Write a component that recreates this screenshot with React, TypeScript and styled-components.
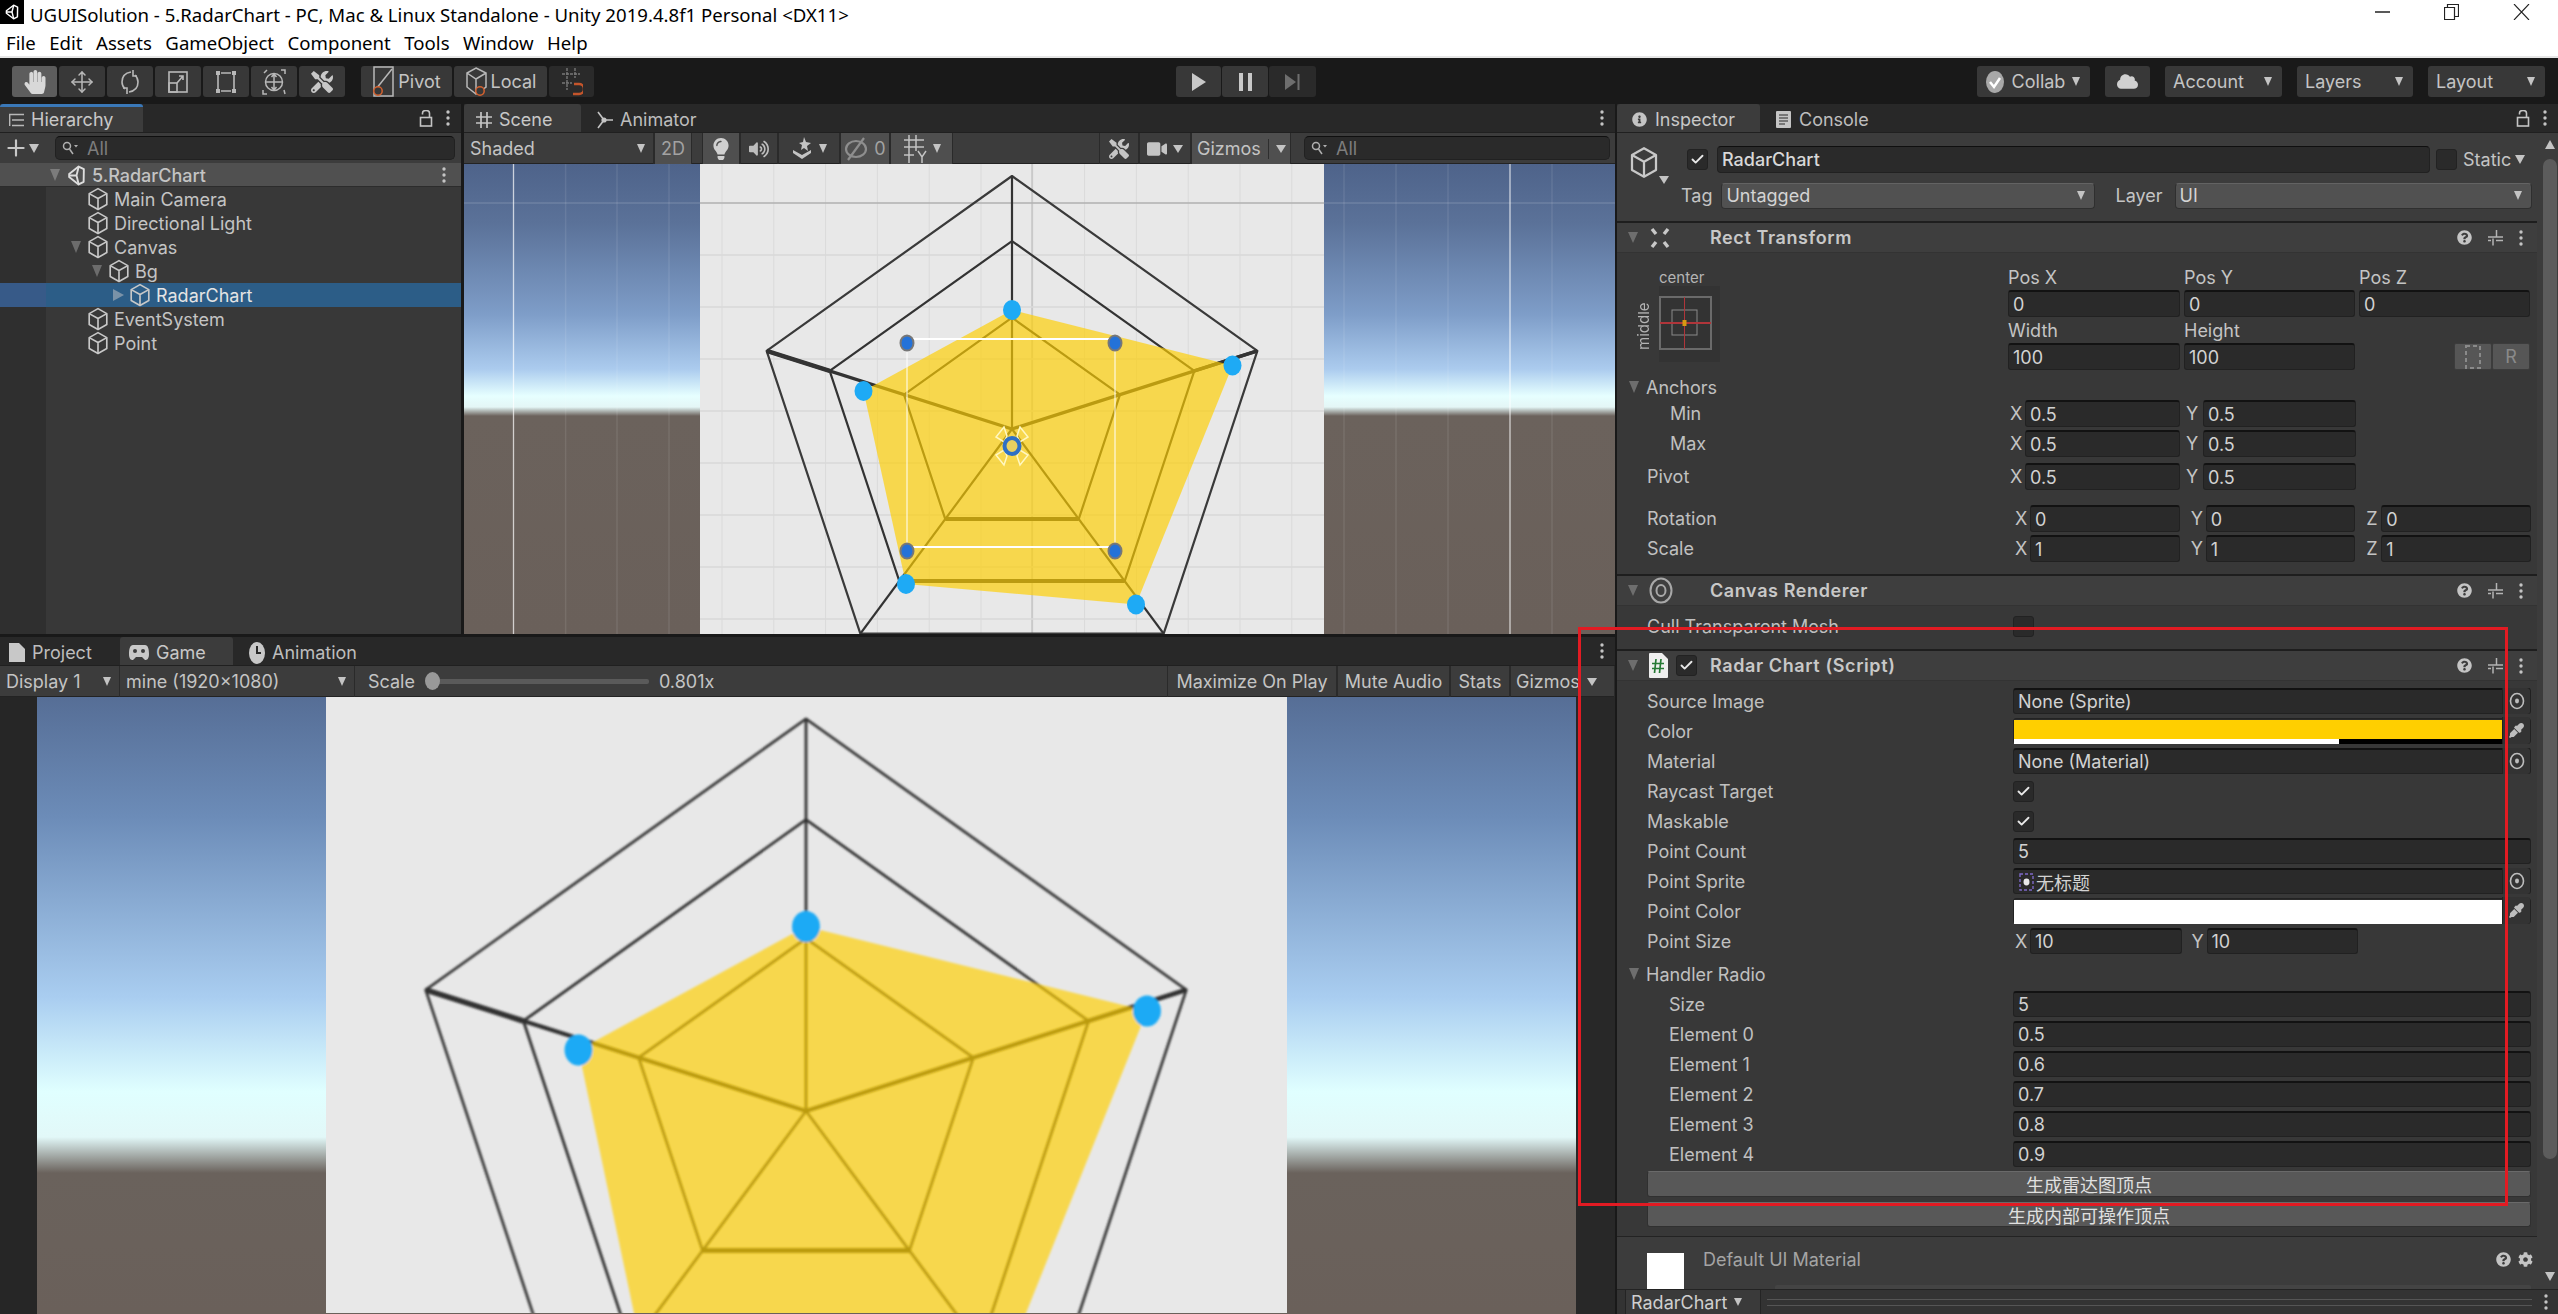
import React from 'react';
import styled, { createGlobalStyle } from 'styled-components';
import { Check, Move, Plus } from 'lucide-react';
import { FaCloud, FaCog, FaEyeDropper, FaHandPaper, FaInfoCircle, FaLightbulb, FaQuestionCircle, FaTools, FaVideo, FaVolumeUp } from 'react-icons/fa';

const GlobalStyle = createGlobalStyle`
  html, body { margin: 0; padding: 0; background: #191919; }
  * { box-sizing: border-box; }
`;

const UI = `Inter, "Noto Sans CJK SC", sans-serif`;

const Page = styled.div`
  position: relative;
  width: 2558px;
  height: 1314px;
  overflow: hidden;
  display: flex;
  flex-direction: column;
  font-family: ${UI};
  font-size: 18px;
  color: #c4c4c4;
  background: #191919;
`;

const TitleBar = styled.div`
  height: 29px;
  background: #fff;
  color: #000;
  display: flex;
  align-items: center;
  font-family: "Noto Sans", sans-serif;
  font-size: 18.6px;
`;
const TitleIcon = styled.div`
  width: 24px;
  height: 24px;
  margin-top: -5px;
  margin-right: 6px;
  background: #000;
  display: flex;
  align-items: center;
  justify-content: center;
`;
const WindowButtons = styled.div`
  margin-left: auto;
  display: flex;
  align-items: center;
  padding-right: 28px;
  gap: 54px;
  margin-top: -6px;
`;
const MenuBar = styled.div`
  height: 29px;
  background: #fff;
  color: #000;
  display: flex;
  align-items: center;
  gap: 13.5px;
  padding-left: 6px;
  font-family: "Noto Sans", sans-serif;
  font-size: 18.6px;
  border-bottom: 2px solid #e6e6e6;
`;

const MainToolbar = styled.div`
  height: 46px;
  display: flex;
  align-items: flex-start;
  padding-top: 8px;
  background: #191919;
`;
const ToolGroup = styled.div<{ $w?: number; $pl?: number; $gap?: number; $end?: boolean }>`
  display: flex;
  gap: ${(p) => p.$gap ?? 2}px;
  ${(p) => (p.$w ? `width: ${p.$w}px;` : '')}
  ${(p) => (p.$pl ? `padding-left: ${p.$pl}px;` : '')}
  ${(p) => (p.$end ? 'margin-left: auto; padding-right: 13px;' : '')}
`;
const ToolButton = styled.div<{ $w: number; $on?: boolean; $dim?: boolean; $ml?: number }>`
  width: ${(p) => p.$w}px;
  height: 31px;
  margin-left: ${(p) => p.$ml ?? 0}px;
  background: ${(p) => (p.$on ? '#5d5d5d' : p.$dim ? '#2a2a2a' : '#383838')};
  border-radius: 3px;
  display: flex;
  align-items: center;
  justify-content: center;
  gap: 3px;
  color: #c4c4c4;
  font-size: 18px;
`;
const DropButton = styled(ToolButton)`
  justify-content: space-between;
  padding: 0 10px 0 8px;
`;

const Caret = styled.span<{ $w?: number; $h?: number; $c?: string; $right?: boolean; $up?: boolean }>`
  flex: none;
  display: inline-block;
  width: 0;
  height: 0;
  ${(p) => (p.$up ? 'transform: rotate(180deg);' : '')}
  ${(p) =>
    p.$right
      ? `border-top: ${(p.$w ?? 10) / 2}px solid transparent;
         border-bottom: ${(p.$w ?? 10) / 2}px solid transparent;
         border-left: ${p.$h ?? 9}px solid ${p.$c ?? '#c4c4c4'};`
      : `border-left: ${(p.$w ?? 10) / 2}px solid transparent;
         border-right: ${(p.$w ?? 10) / 2}px solid transparent;
         border-top: ${p.$h ?? 9}px solid ${p.$c ?? '#c4c4c4'};`}
`;

const Workspace = styled.div`
  flex: 1;
  display: flex;
  gap: 2px;
  min-height: 0;
`;
const LeftColumn = styled.div`
  width: 1615px;
  display: flex;
  flex-direction: column;
  gap: 3px;
`;
const TopRow = styled.div`
  height: 530px;
  display: flex;
  gap: 3px;
`;
const Panel = styled.div<{ $w?: number }>`
  ${(p) => (p.$w ? `width: ${p.$w}px;` : 'flex: 1;')}
  min-width: 0;
  display: flex;
  flex-direction: column;
  overflow: hidden;
  background: #383838;
`;
const TabStrip = styled.div`
  height: 29px;
  flex: none;
  display: flex;
  align-items: stretch;
  background: #282828;
  border-bottom: 1px solid #202020;
`;
const Tab = styled.div<{ $w: number; $on?: boolean; $blue?: boolean; $pl?: number; $gap?: number }>`
  width: ${(p) => p.$w}px;
  display: flex;
  align-items: center;
  gap: ${(p) => p.$gap ?? 7}px;
  padding-left: ${(p) => p.$pl ?? 9}px;
  color: ${(p) => (p.$on ? '#c8c8c8' : '#bdbdbd')};
  background: ${(p) => (p.$on ? '#3c3c3c' : 'transparent')};
  border-top: 3px solid ${(p) => (p.$blue ? '#3a78b8' : 'transparent')};
  border-radius: 3px 3px 0 0;
  font-size: 18px;
`;
const TabTools = styled.div`
  margin-left: auto;
  display: flex;
  align-items: center;
  gap: 13px;
  padding-right: 11px;
`;

const HierarchyBar = styled.div`
  height: 30px;
  flex: none;
  display: flex;
  align-items: center;
  background: #3c3c3c;
  padding: 0 6px 0 3px;
`;
const SearchBox = styled.div<{ $w?: number; $ml?: number }>`
  ${(p) => (p.$w ? `width: ${p.$w}px;` : 'flex: 1;')}
  margin-left: ${(p) => p.$ml ?? 0}px;
  height: 24px;
  background: #2a2a2a;
  border: 1px solid #212121;
  border-top-color: #0f0f0f;
  border-radius: 5px;
  display: flex;
  align-items: center;
  gap: 9px;
  padding-left: 6px;
  color: #7d7d7d;
`;
const TreeList = styled.div`
  flex: 1;
  background: linear-gradient(90deg, #2f2f2f 46px, #383838 46px);
`;
const TreeRow = styled.div<{ $depth: number; $kind?: 'head' | 'selected' }>`
  height: 24px;
  display: flex;
  align-items: center;
  padding-left: ${(p) => 46 + p.$depth * 21}px;
  padding-right: 15px;
  color: ${(p) => (p.$kind === 'selected' ? '#e4e4e4' : '#c4c4c4')};
  background: ${(p) =>
    p.$kind === 'selected'
      ? 'linear-gradient(90deg, #375a88 46px, #2c5d87 46px)'
      : p.$kind === 'head'
        ? '#505050'
        : 'transparent'};
  ${(p) => (p.$kind === 'head' ? 'box-shadow: inset 0 -1px 0 #2c2c2c; font-weight: 500;' : '')}
`;
const TreeArrow = styled.span`
  width: 20px;
  flex: none;
  display: flex;
  justify-content: center;
  padding-right: 2px;
`;
const TreeLabel = styled.span`
  margin-left: 5px;
`;
const TreeDots = styled.span`
  margin-left: auto;
  display: flex;
`;

const ViewBar = styled.div`
  height: 31px;
  flex: none;
  display: flex;
  align-items: stretch;
  background: #3c3c3c;
  box-shadow: inset 0 -1px 0 #232323;
`;
const ViewCell = styled.div<{ $w: number; $on?: boolean; $ml?: number; $dim?: boolean }>`
  width: ${(p) => p.$w}px;
  margin-left: ${(p) => p.$ml ?? 0}px;
  flex: none;
  display: flex;
  align-items: center;
  justify-content: center;
  gap: 6px;
  background: ${(p) => (p.$on ? '#4f4f4f' : 'transparent')};
  border-right: 1px solid #2a2a2a;
  border-left: 1px solid #2a2a2a;
  color: ${(p) => (p.$dim ? '#a2a2a2' : '#c4c4c4')};
  white-space: nowrap;
  overflow: hidden;
`;
const ViewPlain = styled(ViewCell)`
  justify-content: space-between;
  padding: 0 8px 0 6px;
  border-left: none;
`;
const GizmoCell = styled(ViewCell)`
  justify-content: flex-start;
  padding-left: 5px;
  gap: 7px;
`;
const GizmoSep = styled.span`
  width: 1px;
  height: 20px;
  background: #2e2e2e;
  flex: none;
`;
const Spacer = styled.div`
  flex: 1;
`;
const ViewSearchWrap = styled.div`
  padding: 3px 5px 0 13px;
`;
const GameBarText = styled.span<{ $w?: number; $ml?: number }>`
  ${(p) => (p.$w ? `width: ${p.$w}px; overflow: hidden;` : '')}
  margin-left: ${(p) => p.$ml ?? 0}px;
  align-self: center;
  white-space: nowrap;
  flex: none;
`;
const SliderTrack = styled.div`
  position: relative;
  width: 212px;
  height: 5px;
  margin-left: 22px;
  align-self: center;
  background: #5a5a5a;
  border-radius: 2px;
  flex: none;
`;
const SliderThumb = styled.div`
  position: absolute;
  left: -12px;
  top: -7px;
  width: 15px;
  height: 18px;
  border-radius: 50%;
  background: #999;
`;

const SceneView = styled.div`
  flex: 1;
  min-height: 0;
  background: linear-gradient(180deg, #4e638a 0, #5b7299 60px, #7e9dc8 150px, #abcbee 205px, #e6ffff 232px, #e4f6f6 243px, #6b625c 252px, #6a605a 100%);
  svg { display: block; }
`;
const GameView = styled.div`
  flex: 1;
  min-height: 0;
  background: linear-gradient(90deg, #262626 37px, transparent 37px, transparent 1576px, #282828 1576px),
    linear-gradient(180deg, #566e96 0, #6c8cb8 120px, #a9cdf0 300px, #e0ffff 395px, #e2f8f8 440px, #6a625c 476px, #6a605a 100%);
  svg { display: block; }
`;

const Inspector = styled.div`
  flex: 1;
  min-width: 0;
  display: flex;
  flex-direction: column;
  background: #383838;
`;
const InspectorBody = styled.div`
  flex: 1;
  min-height: 0;
  display: flex;
`;
const InspectorContent = styled.div`
  width: 920px;
  display: flex;
  flex-direction: column;
`;
const ScrollBar = styled.div`
  flex: 1;
  background: #3c3c3c;
  display: flex;
  flex-direction: column;
  align-items: center;
  padding: 7px 0 8px 4px;
`;
const ScrollThumb = styled.div`
  width: 14px;
  height: 1000px;
  margin-top: 10px;
  background: #5c5c5c;
  border-radius: 7px;
`;
const ObjectHeader = styled.div`
  height: 88px;
  background: #3c3c3c;
  display: grid;
  grid-template-columns: 64px 1fr;
  padding: 13px 6px 0 12px;
`;
const ObjectIcon = styled.div`
  position: relative;
`;
const ObjectCaret = styled(Caret)`
  position: absolute;
  left: 30px;
  top: 30px;
`;
const ObjectRows = styled.div`
  display: flex;
  flex-direction: column;
  gap: 9px;
`;
const NameRow = styled.div`
  height: 27px;
  display: flex;
  align-items: center;
`;
const TagRow = styled.div`
  height: 27px;
  display: flex;
  align-items: center;
`;
const TagLabel = styled.span<{ $ml: number }>`
  margin-left: ${(p) => p.$ml}px;
`;
const CheckBox = styled.div<{ $ml?: number }>`
  width: 21px;
  height: 21px;
  flex: none;
  margin-left: ${(p) => p.$ml ?? 0}px;
  background: #2a2a2a;
  border: 1px solid #222;
  border-radius: 3px;
  display: flex;
  align-items: center;
  justify-content: center;
  color: #e8e8e8;
`;
const NameField = styled.div`
  width: 713px;
  height: 27px;
  margin-left: 9px;
  padding-left: 4px;
  background: #2a2a2a;
  border: 1px solid #212121;
  border-top-color: #0f0f0f;
  border-radius: 4px;
  display: flex;
  align-items: center;
  color: #d8d8d8;
  font-weight: 500;
`;
const StaticLabel = styled.span`
  margin-left: 6px;
  display: flex;
  align-items: center;
  gap: 4px;
`;
const Dropdown = styled.div<{ $w: number; $ml?: number }>`
  width: ${(p) => p.$w}px;
  margin-left: ${(p) => p.$ml ?? 0}px;
  height: 26px;
  background: #515151;
  border: 1px solid #2f2f2f;
  border-top-color: #636363;
  border-radius: 4px;
  display: flex;
  align-items: center;
  justify-content: space-between;
  padding: 0 9px 0 4px;
  color: #d4d4d4;
`;
const SectionHeader = styled.div`
  height: 32px;
  flex: none;
  display: flex;
  align-items: center;
  background: #3e3e3e;
  border-top: 2px solid #1e1e1e;
  border-bottom: 1px solid #333;
  padding-left: 11px;
`;
const SectionIcon = styled.span`
  width: 61px;
  margin-left: 11px;
  display: flex;
  align-items: center;
  gap: 8px;
`;
const SectionTitle = styled.span`
  font-weight: 600;
  color: #c8c8c8;
  letter-spacing: 0.6px;
`;
const SectionTools = styled.span`
  margin-left: auto;
  display: flex;
  align-items: center;
  gap: 16px;
  padding-right: 14px;
`;
const RectBody = styled.div`
  height: 321px;
  flex: none;
  padding-top: 15px;
`;
const RectTop = styled.div`
  display: grid;
  grid-template-columns: 387px 172px 171px 171px;
  column-gap: 4px;
  grid-template-rows: 18px 27px 18px 27px;
  row-gap: 4px;
  align-items: center;
`;
const AnchorBlock = styled.div`
  grid-row: 1 / span 4;
  display: grid;
  grid-template-columns: 42px 61px;
  grid-template-rows: 18px 76px;
  align-self: start;
`;
const SmallLabel = styled.span`
  font-size: 15px;
  color: #b4b4b4;
`;
const VerticalLabel = styled.span`
  font-size: 15px;
  color: #b4b4b4;
  writing-mode: vertical-rl;
  transform: rotate(180deg);
  justify-self: end;
  padding-top: 12px;
  margin-right: 6px;
`;
const AnchorBox = styled.div`
  background: #333;
  padding: 10px 8px 12px 0;
`;
const FieldHead = styled.span`
  color: #c4c4c4;
`;
const Field = styled.div<{ $h?: number }>`
  height: ${(p) => p.$h ?? 26}px;
  min-width: 0;
  flex: 1;
  padding-left: 4px;
  background: #2a2a2a;
  border: 1px solid #212121;
  border-top: 2px solid #121212;
  border-radius: 3px;
  display: flex;
  align-items: center;
  color: #d2d2d2;
  white-space: nowrap;
`;
const RectButtons = styled.div`
  display: flex;
  justify-content: flex-end;
`;
const RectButton = styled.div`
  width: 38px;
  height: 27px;
  background: #565656;
  border: 1px solid #3c3c3c;
  border-radius: 2px;
  display: flex;
  align-items: center;
  justify-content: center;
  color: #8a8a8a;
`;
const PropRow = styled.div<{ $h?: number; $mt?: number }>`
  height: ${(p) => p.$h ?? 30}px;
  margin-top: ${(p) => p.$mt ?? 0}px;
  flex: none;
  display: grid;
  grid-template-columns: 396px 518px;
  align-items: center;
`;
const PropLabel = styled.div<{ $indent?: number }>`
  padding-left: ${(p) => p.$indent ?? 30}px;
  display: flex;
  align-items: center;
  color: #c0c0c0;
  white-space: nowrap;
`;
const FoldLabel = styled(PropLabel)`
  padding-left: 12px;
  gap: 7px;
`;
const VecRow = styled.div<{ $w: number; $gap: number; $ml: number }>`
  width: ${(p) => p.$w}px;
  display: grid;
  grid-auto-flow: column;
  grid-auto-columns: minmax(0, 1fr);
  column-gap: ${(p) => p.$gap}px;
  margin-left: ${(p) => p.$ml}px;
`;
const VecItem = styled.div`
  display: flex;
  align-items: center;
  gap: 3px;
  min-width: 0;
`;
const Axis = styled.span<{ $w?: number }>`
  flex: none;
  width: ${(p) => p.$w ?? 13}px;
  padding-left: 1px;
`;
const CanvasBody = styled.div`
  height: 43px;
  flex: none;
  padding-top: 5px;
`;
const ScriptBody = styled.div`
  height: 555px;
  flex: none;
  padding-top: 5px;
`;
const ObjectField = styled(Field)`
  position: relative;
  padding-right: 28px;
`;
const PickerTag = styled.span`
  position: absolute;
  right: 0;
  top: -2px;
  bottom: -1px;
  width: 28px;
  display: flex;
  align-items: center;
  justify-content: center;
  background: #333;
  border-left: 1px solid #212121;
  border-radius: 0 3px 3px 0;
`;
const ColorField = styled.div`
  height: 26px;
  position: relative;
  background: #2a2a2a;
  border-radius: 3px;
  border: 1px solid #222;
  padding: 1px 28px 0 0;
`;
const ColorSwatch = styled.div<{ $c: string }>`
  height: 19px;
  background: ${(p) => p.$c};
`;
const AlphaBar = styled.div`
  height: 5px;
  background: #000;
`;
const AlphaFill = styled.div`
  height: 5px;
  background: #fff;
`;
const WhiteSwatch = styled.div`
  height: 24px;
  background: #fff;
`;
const WideButton = styled.div<{ $mt: number; $h: number }>`
  margin: ${(p) => p.$mt}px 6px 0 30px;
  height: ${(p) => p.$h}px;
  background: #585858;
  border: 1px solid #303030;
  border-top-color: #6a6a6a;
  border-radius: 3px;
  display: flex;
  align-items: center;
  justify-content: center;
  color: #e0e0e0;
`;
const MaterialBlock = styled.div`
  flex: 1;
  min-height: 0;
  display: flex;
  overflow: hidden;
  background: #3c3c3c;
  border-top: 1px solid #232323;
  padding: 16px 6px 0 30px;
  position: relative;
`;
const MaterialThumb = styled.div`
  width: 37px;
  height: 40px;
  background: #fff;
  flex: none;
`;
const MaterialName = styled.span`
  margin-left: 19px;
  margin-top: -4px;
  color: #a4a4a4;
`;
const MaterialTools = styled.span`
  margin-left: auto;
  display: flex;
  gap: 7px;
  margin-right: -2px;
  margin-top: -1px;
  height: 20px;
`;
const MaterialShader = styled.div`
  position: absolute;
  left: 158px;
  right: 6px;
  bottom: 0;
  height: 4px;
  background: #444;
  border-radius: 2px 2px 0 0;
`;
const AssetBar = styled.div`
  height: 25px;
  flex: none;
  display: flex;
  align-items: center;
  background: #333;
  border-top: 1px solid #232323;
  padding-left: 8px;
`;
const AssetName = styled.div`
  height: 100%;
  width: 136px;
  padding-left: 5px;
  display: flex;
  align-items: center;
  gap: 7px;
  border: 1px solid #242424;
  border-width: 0 1px;
  background: #3a3a3a;
  color: #cfcfcf;
`;
const AssetTrack = styled.div`
  flex: 1;
  height: 7px;
  margin: 0 12px 0 6px;
  border-top: 1px solid #555;
  border-bottom: 1px solid #555;
`;
const AssetDots = styled.span`
  padding-right: 10px;
  display: flex;
`;

const RedFrame = styled.div`
  position: absolute;
  left: 1578px;
  top: 627px;
  width: 930px;
  height: 579px;
  border: 3px solid #e21b23;
  pointer-events: none;
`;

/* ---- icons ---- */

const Dots = ({ c = '#c4c4c4' }: { c?: string }) => (
  <svg width="4" height="16" viewBox="0 0 4 16">
    <circle cx="2" cy="2" r="1.7" fill={c} />
    <circle cx="2" cy="8" r="1.7" fill={c} />
    <circle cx="2" cy="14" r="1.7" fill={c} />
  </svg>
);

const LockIcon = () => (
  <svg width="14" height="17" viewBox="0 0 14 17" fill="none" stroke="#c4c4c4" strokeWidth="1.6">
    <rect x="1.5" y="7.5" width="11" height="8.5" />
    <path d="M3.5 4.5V3a3.5 2.5 0 0 1 7 0v4" />
  </svg>
);

const Cube = ({ s = 22, c = '#c8c8c8', w = 1.5 }: { s?: number; c?: string; w?: number }) => (
  <svg width={s} height={s * 1.1} viewBox="0 0 20 22" fill="none" stroke={c} strokeWidth={w} strokeLinejoin="round" style={{ flex: 'none' }}>
    <path d="M10 1.5 18 6v10l-8 4.5L2 16V6z" />
    <path d="M2 6l8 4.5L18 6M10 10.5v10" />
  </svg>
);

const UnityLogo = ({ s = 20, c = '#ddd' }: { s?: number; c?: string }) => (
  <svg width={s} height={s} viewBox="0 0 20 20" fill="none" stroke={c} strokeWidth="1.8" strokeLinejoin="round" style={{ flex: 'none' }}>
    <path d="M12 1.5 17 4l-.2 12L12 18.5 3 11.5v-3z" />
    <path d="M3.5 10H10l2-8M10 10l2 8" />
  </svg>
);

const RotateIcon = () => (
  <svg width="22" height="26" viewBox="0 0 22 26" fill="none" stroke="#b8b8b8" strokeWidth="1.6">
    <path d="M12 3C6 4 3 8 3 13c0 3 1 5 3 7" />
    <path d="M10 23c6-1 9-5 9-10 0-3-1-5-3-7" />
    <path d="M14 1v6h4M8 25v-6H4" />
  </svg>
);
const ScaleIcon = () => (
  <svg width="22" height="24" viewBox="0 0 22 24" fill="none" stroke="#b8b8b8" strokeWidth="1.6">
    <rect x="2" y="2" width="18" height="20" />
    <rect x="2" y="13" width="8" height="9" />
    <path d="M10 13l6-7M12 6h4v4" />
  </svg>
);
const RectToolIcon = () => (
  <svg width="22" height="24" viewBox="0 0 22 24" fill="none" stroke="#b8b8b8" strokeWidth="1.6">
    <path d="M3 5v14M19 5v14M6 3h10M6 21h10" />
    <path d="M1 1h4v4H1zM17 1h4v4h-4zM1 19h4v4H1zM17 19h4v4h-4z" fill="#b8b8b8" stroke="none" />
  </svg>
);
const TransformIcon = () => (
  <svg width="24" height="28" viewBox="0 0 24 28" fill="none" stroke="#b8b8b8" strokeWidth="1.5">
    <circle cx="12" cy="14" r="8.5" />
    <path d="M12 6v16M4 14h16M12 6l-2.5 3M12 6l2.5 3M12 22l-2.5-3M12 22l2.5-3" />
    <path d="M2 5l3-3M19 2h4v4M1 22v4h4M22 22l1 4" />
  </svg>
);
const PivotIcon = () => (
  <svg width="23" height="32" viewBox="0 0 23 32" fill="none" strokeWidth="1.5">
    <rect x="2" y="1" width="19" height="29" stroke="#b8b8b8" />
    <path d="M4 23 20 3" stroke="#b8b8b8" />
    <circle cx="6" cy="25" r="4.2" stroke="#d5622f" fill="#383838" />
  </svg>
);
const LocalIcon = () => (
  <svg width="23" height="32" viewBox="0 0 23 32" fill="none" strokeWidth="1.5">
    <path d="M11 2 21 7v14l-10 7-9-7V7zM2 7l9 6 10-6M11 13v15" stroke="#b8b8b8" />
    <circle cx="15" cy="25" r="4.2" stroke="#d5622f" fill="#383838" />
  </svg>
);
const SnapIcon = () => (
  <svg width="22" height="30" viewBox="0 0 22 30" fill="none" strokeWidth="1.4">
    <path d="M6 1v22M14 1v10M1 7h18M1 16h10" stroke="#777" strokeDasharray="3 1" />
    <path d="M13 17h5a3 3 0 0 1 0 10h-6" stroke="#c4552b" strokeWidth="2.4" />
  </svg>
);
const PlayGlyph = () => (
  <svg width="14" height="18" viewBox="0 0 14 18"><path d="M0 0l14 9-14 9z" fill="#c8c8c8" /></svg>
);
const PauseGlyph = () => (
  <svg width="13" height="18" viewBox="0 0 13 18"><path d="M0 0h4v18H0zM9 0h4v18H9z" fill="#c8c8c8" /></svg>
);
const StepGlyph = () => (
  <svg width="15" height="16" viewBox="0 0 15 16"><path d="M0 0l11 8L0 16zM12.5 0h2v16h-2z" fill="#6e6e6e" /></svg>
);
const CollabGlyph = () => (
  <svg width="20" height="24" viewBox="0 0 20 24">
    <ellipse cx="10" cy="12" rx="9" ry="11" fill="#a8a8a8" />
    <path d="M5 12l4 5 6-9" stroke="#fff" strokeWidth="2.5" fill="none" />
  </svg>
);
const HierarchyGlyph = () => (
  <svg width="15" height="14" viewBox="0 0 15 14" fill="none" stroke="#b8b8b8" strokeWidth="1.4">
    <path d="M0 1.5h15M3 7h12M3 12.5h12M.7 2v11" />
  </svg>
);
const SceneGlyph = () => (
  <svg width="16" height="16" viewBox="0 0 16 16" fill="none" stroke="#c4c4c4" strokeWidth="1.7">
    <path d="M5 0v16M11 0v16M0 5h16M0 11h16" />
  </svg>
);
const AnimatorGlyph = () => (
  <svg width="16" height="18" viewBox="0 0 16 18" fill="none" stroke="#c4c4c4" strokeWidth="1.6">
    <path d="M1 1l6 8-6 8M7 9h9" />
    <circle cx="7" cy="9" r="1.8" fill="#c4c4c4" />
  </svg>
);
const ConsoleGlyph = () => (
  <svg width="15" height="17" viewBox="0 0 15 17">
    <rect width="15" height="17" rx="1" fill="#c4c4c4" />
    <path d="M3 4h9M3 7h9M3 10h9M3 13h6" stroke="#282828" strokeWidth="1.2" />
  </svg>
);
const ProjectGlyph = () => (
  <svg width="16" height="19" viewBox="0 0 16 19"><path d="M0 0h10l6 6v13H0z" fill="#c8c8c8" /></svg>
);
const GameGlyph = () => (
  <svg width="20" height="15" viewBox="0 0 20 15">
    <path d="M4 0h12c3 0 4 4 4 9 0 5-2 6-4 6l-3-3H7l-3 3c-2 0-4-1-4-6s1-9 4-9z" fill="#c8c8c8" />
    <circle cx="6" cy="6" r="2" fill="#3c3c3c" />
    <circle cx="14" cy="6" r="2" fill="#3c3c3c" />
  </svg>
);
const AnimationGlyph = () => (
  <svg width="16" height="22" viewBox="0 0 16 22">
    <ellipse cx="8" cy="11" rx="8" ry="11" fill="#c8c8c8" />
    <path d="M8 4v7h4" stroke="#282828" strokeWidth="2" fill="none" />
  </svg>
);
const SearchGlyph = () => (
  <svg width="16" height="14" viewBox="0 0 16 14" fill="none" stroke="#b0b0b0" strokeWidth="1.5">
    <circle cx="5" cy="5" r="3.5" />
    <path d="M7.5 8 11 13" />
    <path d="M12 4h4l-2 2.5z" fill="#b0b0b0" stroke="none" />
  </svg>
);
const FxGlyph = () => (
  <svg width="22" height="26" viewBox="0 0 22 26">
    <path d="M13 1l2 5 5 1-4 3 1 5-4-3-3 2 1-5-3-2 4-1z" fill="#c4c4c4" />
    <path d="M2 14l9 5 9-5v3l-9 6-9-6z" fill="#c4c4c4" />
  </svg>
);
const HiddenGlyph = () => (
  <svg width="24" height="24" viewBox="0 0 24 24" fill="none" stroke="#8e8e8e" strokeWidth="2.2">
    <ellipse cx="12" cy="12" rx="10" ry="8" />
    <path d="M20 1 4 23" />
  </svg>
);
const GridGlyph = () => (
  <svg width="24" height="30" viewBox="0 0 24 30" fill="none" stroke="#c4c4c4" strokeWidth="1.5">
    <path d="M6 1v28M13 1v16M1 6h20M1 13h20M1 21h10" />
    <path d="M15 17l4 6 4-6M19 23v6" />
  </svg>
);
const RectGlyph = () => (
  <svg width="22" height="24" viewBox="0 0 22 24" fill="none">
    <path d="M3 21l4-5M19 21l-4-5M3 3l4 5M19 3l-4 5" stroke="#c8c8c8" strokeWidth="3.4" />
  </svg>
);
const PresetGlyph = () => (
  <svg width="15" height="16" viewBox="0 0 15 16" fill="none" stroke="#b4b4b4" strokeWidth="1.5">
    <path d="M8.5 0v7M0 7h15M5 8.5v7M0 10.5h3M8 10.5h7" />
  </svg>
);
const RendererGlyph = () => (
  <svg width="24" height="27" viewBox="0 0 24 27" fill="none" stroke="#a8a8a8" strokeWidth="2">
    <ellipse cx="12" cy="13.5" rx="10.5" ry="12" />
    <ellipse cx="12" cy="13.5" rx="4.5" ry="5.5" />
  </svg>
);
const ScriptGlyph = () => (
  <svg width="19" height="25" viewBox="0 0 19 25">
    <path d="M0 1a1 1 0 0 1 1-1h12l6 6v18a1 1 0 0 1-1 1H1a1 1 0 0 1-1-1z" fill="#efefef" />
    <path d="M7 6 5.5 20M12 6l-1.5 14M3 10.5h12M3 15.5h12" stroke="#267a35" strokeWidth="1.7" />
  </svg>
);
const TargetGlyph = () => (
  <svg width="16" height="18" viewBox="0 0 16 18" fill="none" stroke="#bdbdbd" strokeWidth="1.6">
    <ellipse cx="8" cy="9" rx="6.5" ry="7.5" />
    <ellipse cx="8" cy="9" rx="2" ry="2.4" fill="#bdbdbd" stroke="none" />
  </svg>
);
const SpriteGlyph = () => (
  <svg width="17" height="20" viewBox="0 0 17 20" fill="none" style={{ flex: 'none', marginRight: 1 }}>
    <rect x="2" y="2" width="13" height="16" stroke="#7d68c8" strokeDasharray="3 2" strokeWidth="1.4" />
    <ellipse cx="8.5" cy="10" rx="3" ry="3.4" fill="#e8e8e8" />
  </svg>
);
const DottedRect = () => (
  <svg width="16" height="24" viewBox="0 0 16 24" fill="none" stroke="#8a8a8a" strokeWidth="2" strokeDasharray="4 3">
    <rect x="1" y="1" width="14" height="22" />
  </svg>
);
const AnchorPreset = () => (
  <svg width="53" height="54" viewBox="0 0 53 54" fill="none">
    <rect x="1" y="1" width="51" height="52" stroke="#6a6a6a" strokeWidth="2" />
    <rect x="13" y="14" width="25" height="25" stroke="#8a8a8a" />
    <path d="M25.5 1v52" stroke="#b0353a" />
    <path d="M1 27h51" stroke="#b0353a" strokeWidth="2" />
    <rect x="23.5" y="24" width="4" height="6" fill="#d69a12" />
  </svg>
);

/* ---- radar drawing, in page coordinates ---- */

type Pt = [number, number];

const pentagon = (cx: number, cy: number, rx: number, ry: number): Pt[] =>
  [0, 1, 2, 3, 4].map((i) => {
    const a = (i * 72 * Math.PI) / 180;
    return [cx + rx * Math.sin(a), cy - ry * Math.cos(a)] as Pt;
  });
const toPoints = (pts: Pt[]) => pts.map((p) => p.join(',')).join(' ');

const Radar = ({ cx, cy, k, w, fill, blur }: { cx: number; cy: number; k: number; w: number; fill: Pt[]; blur?: boolean }) => {
  const rings = [1, 0.743, 0.44].map((f) => pentagon(cx, cy, 258 * k * f, 253 * k * f));
  const outer = rings[0];
  const inner = rings[1];
  return (
    <g filter={blur ? 'url(#soft)' : undefined}>
      <g fill="none" stroke="#333" strokeWidth={w} strokeLinejoin="round">
        {rings.map((r, i) => (
          <polygon key={i} points={toPoints(r)} stroke={i === 0 ? '#3a3a3a' : '#333'} />
        ))}
        {outer.map((p, i) => (
          <line key={i} x1={cx} y1={cy} x2={p[0]} y2={p[1]} strokeWidth={i === 1 || i === 4 ? w * 1.5 : w} />
        ))}
        <line x1={outer[4][0]} y1={outer[4][1]} x2={inner[4][0]} y2={inner[4][1]} strokeWidth={w * 2} />
        <line x1={outer[1][0]} y1={outer[1][1]} x2={inner[1][0]} y2={inner[1][1]} strokeWidth={w * 1.6} />
        <polyline points={toPoints([rings[2][2], rings[2][3]])} strokeWidth={w * 1.8} />
        <polyline points={toPoints([inner[2], inner[3]])} strokeWidth={w * 1.8} />
      </g>
      <polygon points={toPoints(fill)} fill="#ffcf00" fillOpacity="0.667" />
      {fill.map((p, i) => (
        <ellipse key={i} cx={p[0]} cy={p[1]} rx={9 * k} ry={10 * k} fill="#1eaaf5" />
      ))}
    </g>
  );
};

const Handle = ({ x, y }: { x: number; y: number }) => (
  <ellipse cx={x} cy={y} rx="6.5" ry="7.5" fill="#2472d8" stroke="#777" strokeWidth="2" />
);

const SceneArt = () => {
  const vLines: number[] = [];
  for (let x = 722; x < 1324; x += 51.8) vLines.push(x);
  const hLines: number[] = [];
  for (let y = 255; y < 634; y += 52) hLines.push(y);
  const skyLines = [565.6, 617, 669, 1344, 1396, 1448, 1552];
  return (
    <svg width="1151" height="470" viewBox="464 164 1151 470">
      {skyLines.map((x) => (
        <line key={x} x1={x} y1="164" x2={x} y2="634" stroke="#fff" strokeOpacity="0.09" strokeWidth="1.5" />
      ))}
      <line x1="464" y1="203" x2="1615" y2="203" stroke="#fff" strokeOpacity="0.14" strokeWidth="1.5" />
      {[513.5, 1510].map((x) => (
        <line key={x} x1={x} y1="164" x2={x} y2="634" stroke="#fff" strokeOpacity="0.7" strokeWidth="1.3" />
      ))}
      <rect x="700" y="164" width="624" height="470" fill="#e8e8e8" />
      {vLines.map((x) => (
        <line key={x} x1={x} y1="164" x2={x} y2="634" stroke="#dadada" />
      ))}
      <line x1="1032" y1="164" x2="1032" y2="634" stroke="#b4b4b4" />
      {hLines.map((y) => (
        <line key={y} x1="700" y1={y} x2="1324" y2={y} stroke="#d8d8d8" strokeWidth="1.5" />
      ))}
      <line x1="700" y1="203" x2="1324" y2="203" stroke="#b0b0b0" strokeWidth="1.5" />
      <Radar
        cx={1012}
        cy={429}
        k={1}
        w={2.2}
        fill={[[1012, 310], [1232.5, 365.5], [1136, 604.5], [906, 584], [863.5, 391]]}
      />
      <path d="M907 339H1115M907 547H1115" stroke="#fff" strokeWidth="2" />
      <path d="M907 339V547M1115 339V547" stroke="#fff" strokeWidth="1" />
      <Handle x={907} y={343} />
      <Handle x={1115} y={343} />
      <Handle x={907} y={551} />
      <Handle x={1115} y={551} />
      <g fill="none" stroke="#fff7c0" strokeWidth="1.5">
        <path d="M1004 427l-8 10 8 5 3-6zM1020 427l8 10-8 5-3-6zM1004 465l-8-10 8-5 3 6zM1020 465l8-10-8-5-3 6z" />
      </g>
      <ellipse cx="1012" cy="446" rx="7.5" ry="8" fill="#e8d060" stroke="#2f70c4" strokeWidth="4" />
    </svg>
  );
};

const GameArt = () => (
  <svg width="1615" height="616" viewBox="0 698 1615 616">
    <defs>
      <filter id="soft">
        <feGaussianBlur stdDeviation="0.8" />
      </filter>
    </defs>
    <rect x="326" y="698" width="961" height="616" fill="#e8e8e8" />
    <Radar
      cx={806}
      cy={1112}
      k={1.55}
      w={2.8}
      blur
      fill={[[806, 927.5], [1147, 1012], [998, 1384], [642, 1352], [578.5, 1051]]}
    />
  </svg>
);

/* ---- data ---- */

const tree: { name: string; depth: number; arrow?: 'down' | 'right'; kind?: 'head' | 'selected' }[] = [
  { name: 'Main Camera', depth: 1 },
  { name: 'Directional Light', depth: 1 },
  { name: 'Canvas', depth: 1, arrow: 'down' },
  { name: 'Bg', depth: 2, arrow: 'down' },
  { name: 'RadarChart', depth: 3, arrow: 'right', kind: 'selected' },
  { name: 'EventSystem', depth: 1 },
  { name: 'Point', depth: 1 },
];

const elements = ['0.5', '0.6', '0.7', '0.8', '0.9'];
const colorAlpha = 170 / 255;

const HeaderTools = () => (
  <SectionTools>
    <FaQuestionCircle size={15} color="#c4c4c4" />
    <PresetGlyph />
    <Dots />
  </SectionTools>
);

const Vec2 = ({ a, b }: { a: string; b: string }) => (
  <VecRow $w={347} $gap={5} $ml={-4}>
    <VecItem><Axis>X</Axis><Field $h={27}>{a}</Field></VecItem>
    <VecItem><Axis $w={15}>Y</Axis><Field $h={27}>{b}</Field></VecItem>
  </VecRow>
);

const Vec3 = ({ v }: { v: string }) => (
  <VecRow $w={517} $gap={10} $ml={1}>
    <VecItem><Axis>X</Axis><Field $h={27}>{v}</Field></VecItem>
    <VecItem><Axis>Y</Axis><Field $h={27}>{v}</Field></VecItem>
    <VecItem><Axis>Z</Axis><Field $h={27}>{v}</Field></VecItem>
  </VecRow>
);

export default function App() {
  return (
    <Page>
      <GlobalStyle />
      <TitleBar>
        <TitleIcon><UnityLogo s={16} c="#fff" /></TitleIcon>
        UGUISolution - 5.RadarChart - PC, Mac &amp; Linux Standalone - Unity 2019.4.8f1 Personal &lt;DX11&gt;
        <WindowButtons>
          <svg width="15" height="2" viewBox="0 0 15 2"><path d="M0 1h15" stroke="#222" strokeWidth="1.5" /></svg>
          <svg width="15" height="16" viewBox="0 0 15 16" fill="none" stroke="#222" strokeWidth="1.2"><path d="M.5 3.5h10v12H.5zM3.5 3.5V.5h11v12h-4" /></svg>
          <svg width="17" height="16" viewBox="0 0 17 16" fill="none" stroke="#222" strokeWidth="1.1"><path d="M1 0l15 16M16 0 1 16" /></svg>
        </WindowButtons>
      </TitleBar>
      <MenuBar>
        {['File', 'Edit', 'Assets', 'GameObject', 'Component', 'Tools', 'Window', 'Help'].map((m) => (
          <span key={m}>{m}</span>
        ))}
      </MenuBar>

      <MainToolbar>
        <ToolGroup $w={1176} $pl={12}>
          <ToolButton $w={45} $on><FaHandPaper size={24} color="#d8d8d8" /></ToolButton>
          <ToolButton $w={46}><Move size={24} color="#b8b8b8" strokeWidth={1.5} /></ToolButton>
          <ToolButton $w={46}><RotateIcon /></ToolButton>
          <ToolButton $w={46}><ScaleIcon /></ToolButton>
          <ToolButton $w={46}><RectToolIcon /></ToolButton>
          <ToolButton $w={46}><TransformIcon /></ToolButton>
          <ToolButton $w={46}><FaTools size={22} color="#c8c8c8" /></ToolButton>
          <ToolButton $w={91} $ml={14}><PivotIcon />Pivot</ToolButton>
          <ToolButton $w={93}><LocalIcon />Local</ToolButton>
          <ToolButton $w={45} $dim><SnapIcon /></ToolButton>
        </ToolGroup>
        <ToolGroup $gap={1}>
          <ToolButton $w={45}><PlayGlyph /></ToolButton>
          <ToolButton $w={46}><PauseGlyph /></ToolButton>
          <ToolButton $w={47} $dim><StepGlyph /></ToolButton>
        </ToolGroup>
        <ToolGroup $end $gap={15}>
          <DropButton $w={113}><CollabGlyph />Collab<Caret $w={9} $h={9} /></DropButton>
          <ToolButton $w={45}><FaCloud size={21} color="#d0d0d0" /></ToolButton>
          <DropButton $w={117}>Account<Caret $w={9} $h={9} /></DropButton>
          <DropButton $w={116}>Layers<Caret $w={9} $h={9} /></DropButton>
          <DropButton $w={117}>Layout<Caret $w={9} $h={9} /></DropButton>
        </ToolGroup>
      </MainToolbar>

      <Workspace>
        <LeftColumn>
          <TopRow>
            <Panel $w={461}>
              <TabStrip>
                <Tab $w={143} $on $blue><HierarchyGlyph />Hierarchy</Tab>
                <TabTools><LockIcon /><Dots /></TabTools>
              </TabStrip>
              <HierarchyBar>
                <Plus size={26} color="#c8c8c8" strokeWidth={2} />
                <Caret $w={10} $h={9} />
                <SearchBox $ml={16}><SearchGlyph />All</SearchBox>
              </HierarchyBar>
              <TreeList>
                <TreeRow $depth={0} $kind="head">
                  <TreeArrow><Caret $w={11} $h={12} $c="#7c7c7c" /></TreeArrow>
                  <UnityLogo s={21} />
                  <TreeLabel>5.RadarChart</TreeLabel>
                  <TreeDots><Dots /></TreeDots>
                </TreeRow>
                {tree.map((t) => (
                  <TreeRow key={t.name} $depth={t.depth} $kind={t.kind}>
                    <TreeArrow>
                      {t.arrow === 'down' && <Caret $w={11} $h={12} $c="#6c6c6c" />}
                      {t.arrow === 'right' && <Caret $w={13} $h={11} $c="#7a92a8" $right />}
                    </TreeArrow>
                    <Cube />
                    <TreeLabel>{t.name}</TreeLabel>
                  </TreeRow>
                ))}
              </TreeList>
            </Panel>

            <Panel>
              <TabStrip>
                <Tab $w={117} $on $pl={12}><SceneGlyph />Scene</Tab>
                <Tab $w={130} $pl={16}><AnimatorGlyph />Animator</Tab>
                <TabTools><Dots /></TabTools>
              </TabStrip>
              <ViewBar>
                <ViewPlain $w={190}>Shaded<Caret $w={9} $h={9} /></ViewPlain>
                <ViewCell $w={38} $on $dim>2D</ViewCell>
                <ViewCell $w={38} $ml={10} $on><FaLightbulb size={22} color="#d0d0d0" /></ViewCell>
                <ViewCell $w={38}><FaVolumeUp size={20} color="#bdbdbd" /></ViewCell>
                <ViewCell $w={62}><FxGlyph /><Caret $w={9} $h={9} /></ViewCell>
                <ViewCell $w={50} $on $dim><HiddenGlyph />0</ViewCell>
                <ViewCell $w={63} $on><GridGlyph /><Caret $w={9} $h={9} /></ViewCell>
                <Spacer />
                <ViewCell $w={40}><FaTools size={20} color="#c4c4c4" /></ViewCell>
                <ViewCell $w={52}><FaVideo size={20} color="#c4c4c4" /><Caret $w={10} $h={8} /></ViewCell>
                <GizmoCell $w={100} $on>Gizmos<GizmoSep /><Caret $w={10} $h={8} /></GizmoCell>
                <ViewSearchWrap><SearchBox $w={306}><SearchGlyph />All</SearchBox></ViewSearchWrap>
              </ViewBar>
              <SceneView><SceneArt /></SceneView>
            </Panel>
          </TopRow>

          <Panel>
            <TabStrip>
              <Tab $w={120}><ProjectGlyph />Project</Tab>
              <Tab $w={113} $on><GameGlyph />Game</Tab>
              <Tab $w={150} $pl={16}><AnimationGlyph />Animation</Tab>
              <TabTools><Dots /></TabTools>
            </TabStrip>
            <ViewBar>
              <ViewPlain $w={120}>Display 1<Caret $w={9} $h={9} /></ViewPlain>
              <ViewPlain $w={235}>mine (1920x1080)<Caret $w={9} $h={9} /></ViewPlain>
              <GameBarText $ml={13}>Scale</GameBarText>
              <SliderTrack><SliderThumb /></SliderTrack>
              <GameBarText $w={55} $ml={10}>0.801x</GameBarText>
              <Spacer />
              <ViewCell $w={170}>Maximize On Play</ViewCell>
              <ViewCell $w={113}>Mute Audio</ViewCell>
              <ViewCell $w={60}>Stats</ViewCell>
              <GizmoCell $w={105}>Gizmos<Caret $w={10} $h={8} /></GizmoCell>
            </ViewBar>
            <GameView><GameArt /></GameView>
          </Panel>
        </LeftColumn>

        <Inspector>
          <TabStrip>
            <Tab $w={143} $on $pl={15} $gap={8}><FaInfoCircle size={15} color="#c4c4c4" />Inspector</Tab>
            <Tab $w={140} $pl={16} $gap={8}><ConsoleGlyph />Console</Tab>
            <TabTools><LockIcon /><Dots /></TabTools>
          </TabStrip>
          <InspectorBody>
            <InspectorContent>
              <ObjectHeader>
                <ObjectIcon>
                  <Cube s={30} />
                  <ObjectCaret $w={10} $h={8} />
                </ObjectIcon>
                <ObjectRows>
                  <NameRow>
                    <CheckBox $ml={-6}><Check size={15} strokeWidth={3} /></CheckBox>
                    <NameField>RadarChart</NameField>
                    <CheckBox $ml={6} />
                    <StaticLabel>Static<Caret $w={10} $h={9} /></StaticLabel>
                  </NameRow>
                  <TagRow>
                    <TagLabel $ml={-12}>Tag</TagLabel>
                    <Dropdown $w={374} $ml={9}>Untagged<Caret $w={9} $h={9} /></Dropdown>
                    <TagLabel $ml={20}>Layer</TagLabel>
                    <Dropdown $w={357} $ml={12}>UI<Caret $w={9} $h={9} /></Dropdown>
                  </TagRow>
                </ObjectRows>
              </ObjectHeader>

              <SectionHeader>
                <Caret $w={11} $h={11} $c="#6e6e6e" />
                <SectionIcon><RectGlyph /></SectionIcon>
                <SectionTitle>Rect Transform</SectionTitle>
                <HeaderTools />
              </SectionHeader>
              <RectBody>
                <RectTop>
                  <AnchorBlock>
                    <span />
                    <SmallLabel>center</SmallLabel>
                    <VerticalLabel>middle</VerticalLabel>
                    <AnchorBox><AnchorPreset /></AnchorBox>
                  </AnchorBlock>
                  <FieldHead>Pos X</FieldHead>
                  <FieldHead>Pos Y</FieldHead>
                  <FieldHead>Pos Z</FieldHead>
                  <Field $h={27}>0</Field>
                  <Field $h={27}>0</Field>
                  <Field $h={27}>0</Field>
                  <FieldHead>Width</FieldHead>
                  <FieldHead>Height</FieldHead>
                  <span />
                  <Field $h={27}>100</Field>
                  <Field $h={27}>100</Field>
                  <RectButtons>
                    <RectButton><DottedRect /></RectButton>
                    <RectButton>R</RectButton>
                  </RectButtons>
                </RectTop>
                <PropRow $h={26} $mt={4}>
                  <FoldLabel><Caret $w={11} $h={12} $c="#6e6e6e" />Anchors</FoldLabel>
                </PropRow>
                <PropRow $h={27}>
                  <PropLabel $indent={53}>Min</PropLabel>
                  <Vec2 a="0.5" b="0.5" />
                </PropRow>
                <PropRow $h={27} $mt={3}>
                  <PropLabel $indent={53}>Max</PropLabel>
                  <Vec2 a="0.5" b="0.5" />
                </PropRow>
                <PropRow $h={27} $mt={6}>
                  <PropLabel>Pivot</PropLabel>
                  <Vec2 a="0.5" b="0.5" />
                </PropRow>
                <PropRow $h={27} $mt={15}>
                  <PropLabel>Rotation</PropLabel>
                  <Vec3 v="0" />
                </PropRow>
                <PropRow $h={27} $mt={3}>
                  <PropLabel>Scale</PropLabel>
                  <Vec3 v="1" />
                </PropRow>
              </RectBody>

              <SectionHeader>
                <Caret $w={11} $h={11} $c="#6e6e6e" />
                <SectionIcon><RendererGlyph /></SectionIcon>
                <SectionTitle>Canvas Renderer</SectionTitle>
                <HeaderTools />
              </SectionHeader>
              <CanvasBody>
                <PropRow>
                  <PropLabel>Cull Transparent Mesh</PropLabel>
                  <CheckBox />
                </PropRow>
              </CanvasBody>

              <SectionHeader>
                <Caret $w={11} $h={11} $c="#6e6e6e" />
                <SectionIcon>
                  <ScriptGlyph />
                  <CheckBox><Check size={15} strokeWidth={3} /></CheckBox>
                </SectionIcon>
                <SectionTitle>Radar Chart (Script)</SectionTitle>
                <HeaderTools />
              </SectionHeader>
              <ScriptBody>
                <PropRow>
                  <PropLabel>Source Image</PropLabel>
                  <ObjectField>None (Sprite)<PickerTag><TargetGlyph /></PickerTag></ObjectField>
                </PropRow>
                <PropRow>
                  <PropLabel>Color</PropLabel>
                  <ColorField>
                    <ColorSwatch $c="#ffcf00" />
                    <AlphaBar><AlphaFill style={{ width: `${(colorAlpha * 100).toFixed(1)}%` }} /></AlphaBar>
                    <PickerTag><FaEyeDropper size={15} color="#bdbdbd" /></PickerTag>
                  </ColorField>
                </PropRow>
                <PropRow>
                  <PropLabel>Material</PropLabel>
                  <ObjectField>None (Material)<PickerTag><TargetGlyph /></PickerTag></ObjectField>
                </PropRow>
                <PropRow>
                  <PropLabel>Raycast Target</PropLabel>
                  <CheckBox><Check size={15} strokeWidth={3} /></CheckBox>
                </PropRow>
                <PropRow>
                  <PropLabel>Maskable</PropLabel>
                  <CheckBox><Check size={15} strokeWidth={3} /></CheckBox>
                </PropRow>
                <PropRow>
                  <PropLabel>Point Count</PropLabel>
                  <Field>5</Field>
                </PropRow>
                <PropRow>
                  <PropLabel>Point Sprite</PropLabel>
                  <ObjectField><SpriteGlyph />无标题<PickerTag><TargetGlyph /></PickerTag></ObjectField>
                </PropRow>
                <PropRow>
                  <PropLabel>Point Color</PropLabel>
                  <ColorField>
                    <WhiteSwatch />
                    <PickerTag><FaEyeDropper size={15} color="#bdbdbd" /></PickerTag>
                  </ColorField>
                </PropRow>
                <PropRow>
                  <PropLabel>Point Size</PropLabel>
                  <VecRow $w={344} $gap={9} $ml={1}>
                    <VecItem><Axis>X</Axis><Field>10</Field></VecItem>
                    <VecItem><Axis>Y</Axis><Field>10</Field></VecItem>
                  </VecRow>
                </PropRow>
                <PropRow $mt={3}>
                  <FoldLabel><Caret $w={11} $h={12} $c="#6e6e6e" />Handler Radio</FoldLabel>
                </PropRow>
                <PropRow>
                  <PropLabel $indent={52}>Size</PropLabel>
                  <Field>5</Field>
                </PropRow>
                {elements.map((v, i) => (
                  <PropRow key={i}>
                    <PropLabel $indent={52}>Element {i}</PropLabel>
                    <Field>{v}</Field>
                  </PropRow>
                ))}
                <WideButton $mt={2} $h={26}>生成雷达图顶点</WideButton>
                <WideButton $mt={5} $h={25}>生成内部可操作顶点</WideButton>
              </ScriptBody>
              <MaterialBlock>
                <MaterialThumb />
                <MaterialName>Default UI Material</MaterialName>
                <MaterialTools>
                  <FaQuestionCircle size={15} color="#c4c4c4" />
                  <FaCog size={15} color="#c4c4c4" />
                </MaterialTools>
                <MaterialShader />
              </MaterialBlock>
            </InspectorContent>
            <ScrollBar>
              <Caret $w={11} $h={9} $up />
              <ScrollThumb />
              <Spacer />
              <Caret $w={11} $h={9} />
            </ScrollBar>
          </InspectorBody>
          <AssetBar>
            <AssetName>RadarChart<Caret $w={9} $h={8} /></AssetName>
            <AssetTrack />
            <AssetDots><Dots /></AssetDots>
          </AssetBar>
        </Inspector>
      </Workspace>
      <RedFrame />
    </Page>
  );
}
